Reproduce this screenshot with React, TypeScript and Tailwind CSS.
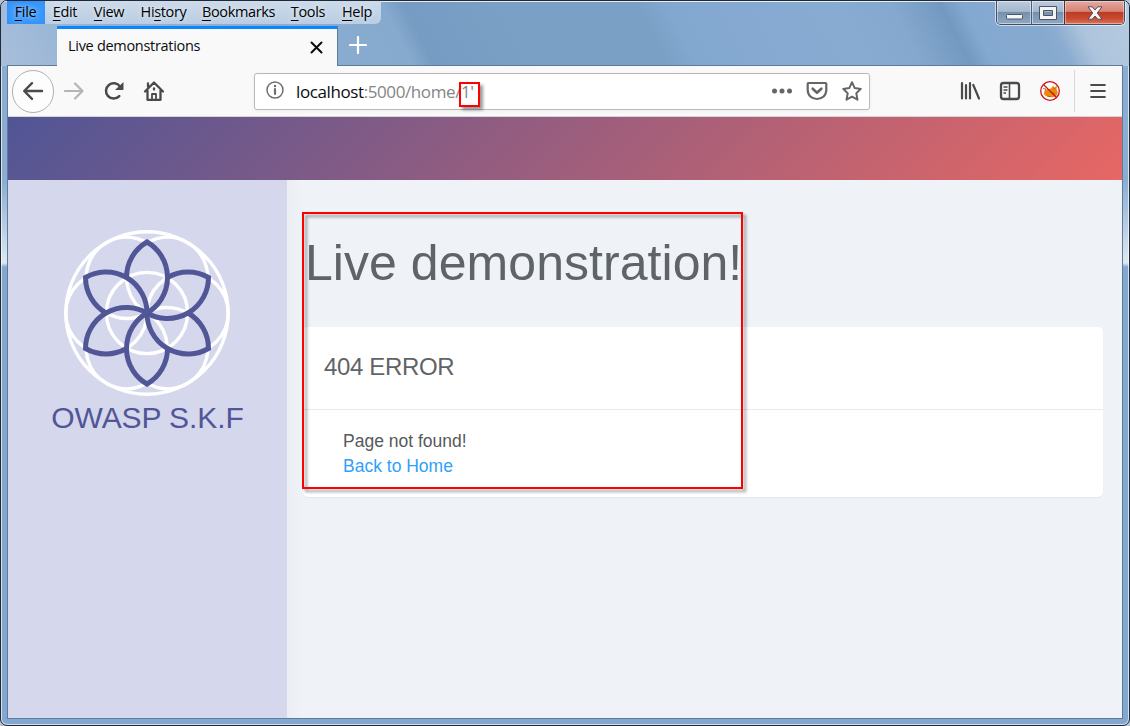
import React from "react";

const menu: [string, string, string, string][] = [
  ["", "F", "ile", "w-[38px] bg-[#3b98fb] shadow-[inset_0_0_5px_#2b8cf8]"],
  ["", "E", "dit", "w-[41px]"],
  ["", "V", "iew", "w-[47px]"],
  ["Hi", "s", "tory", "w-[62px]"],
  ["", "B", "ookmarks", "w-[88px]"],
  ["", "T", "ools", "w-[51px]"],
  ["", "H", "elp", "w-[47px]"],
];

function MenuBar() {
  return (
    <div className="flex h-[23px] rounded-br-md bg-[linear-gradient(#cddbea,#b9cde3)]">
      {menu.map(([a, u, b, cls]) => (
        <div key={u + b} className={`flex h-[23px] items-center justify-center pr-px text-[14.5px] leading-[21px] tracking-[-0.35px] whitespace-nowrap text-black [text-shadow:0_0_5px_#ffffffcc] ${cls}`}>
          <span className="-mt-[2px]">
            {a}
            <span className="underline decoration-1 underline-offset-[3px]">{u}</span>
            {b}
          </span>
        </div>
      ))}
    </div>
  );
}

function WindowControls() {
  return (
    <div className="mr-[4px] flex h-[24px] w-[129px] overflow-hidden rounded-b-[5px] border border-t-0 border-[#3f4f66] shadow-[0_0_0_1px_#ffffff99]">
      <div className="flex w-[35px] items-end justify-center border-r border-[#4b5f79] bg-[linear-gradient(#bccbdc_0%,#a5b8cd_45%,#7590ad_50%,#8fa9c4_100%)] pb-[4px] shadow-[inset_0_0_0_1px_#ffffff77]">
        <svg width="17" height="6"><rect x=".5" y=".5" width="16" height="4.500" rx="1" fill="#f5f5f5" stroke="#4c5566" /></svg>
      </div>
      <div className="flex w-[33px] items-center justify-center border-r border-[#5d2b2b] bg-[linear-gradient(#bccbdc_0%,#a5b8cd_45%,#7590ad_50%,#8fa9c4_100%)] shadow-[inset_0_0_0_1px_#ffffff77]">
        <svg width="18" height="14"><path d="M.5.5h17v13H.5zM4.500 4.500v5h9v-5z" fill="#f5f5f5" fillRule="evenodd" stroke="#4c5566" /></svg>
      </div>
      <div className="flex flex-1 items-center justify-center bg-[linear-gradient(#e5aaa0_0%,#d68476_45%,#bd3c25_50%,#c9482f_75%,#d9755b_100%)] shadow-[inset_0_0_0_1px_#ffffff66]">
        <svg width="16" height="14"><path d="M1 .8h4.200L8 4l2.800-3.200H15L10.300 7l4.700 6.200h-4.200L8 10l-2.800 3.200H1L5.700 7z" fill="#f5f5f5" stroke="#574a56" /></svg>
      </div>
    </div>
  );
}

function ChromeTop() {
  return (
    <div className="flex h-[65px] flex-col bg-[linear-gradient(63deg,#a9bfda_0px,#8fb0d3_110px,#86aace_368px,#779cc3_386px,#7ba0c6_478px,#7ba0c6_594px,#83a8cf_620px,#88abd2_772px,#84a8ce_821px,#7499c0_865px,#84a9d1_885px,#86a9ce_941px,#8bacd0_955px,#adc4dd_980px,#b5cbe0_1034px)] shadow-[inset_0_1px_0_#ffffffcc]">
      <div className="flex h-[25px] justify-between pl-[6px]">
        <MenuBar />
        <WindowControls />
      </div>
      <div className="flex h-[40px] pl-[6px]">
        <div className="w-[50px] border-b border-[#5f7b9b]" />
        <div className="flex h-[41px] w-[281px] shrink-0 items-center justify-between border-t-[3px] border-r border-t-[#0a84ff] border-r-[#5f7b9b] bg-[#f9f9fa] pr-[14px] pb-[2px] pl-[11px]">
          <span className="-mt-[2px] text-[14.500px] tracking-[-0.300px] whitespace-nowrap text-[#0c0c0d]">Live demonstrations</span>
          <svg width="13" height="13" viewBox="0 0 13 13" stroke="#0c0c0d" strokeWidth="2" strokeLinecap="round"><path d="M1.500 1.500l10 10M11.500 1.500l-10 10" /></svg>
        </div>
        <div className="mr-[6px] flex-1 border-b border-[#5f7b9b] pt-[10px] pl-[11px]">
          <svg width="18" height="18" viewBox="0 0 18 18" stroke="#fff" strokeWidth="2.200" strokeLinecap="round"><path d="M9 1v16M1 9h16" /></svg>
        </div>
      </div>
    </div>
  );
}

function NoScriptFox() {
  return (
    <svg width="22" height="22" viewBox="0 0 22 22">
      <circle cx="11" cy="11" r="9.300" fill="#fff" />
      <path d="M5 14.500c-.5-3 1.500-5.500 5-5.500 2-.3 3-1 4-3.500L15.500 7.500l2.500-2-.5 4c1.500 2 1.500 4 0 6-2 2.500-9 2.500-12.500-1z" fill="#ee8a0a" />
      <path d="M4 8.500l3 .5-1 2M8 16l4 .8M14.500 8.500l2 .5M13 12l3 2" stroke="#85652f" strokeWidth=".8" fill="none" />
      <circle cx="11" cy="11" r="9.300" fill="none" stroke="#d01018" strokeWidth="1.300" />
      <path d="M4.500 4.500l13 13" stroke="#d01018" strokeWidth="1.300" />
    </svg>
  );
}

function Toolbar() {
  return (
    <div className="flex h-[51px] items-center border-b border-[#d5d5d8] bg-[#f9f9fa] pl-[4px]">
      <div className="flex h-[43px] w-[42px] shrink-0 items-center justify-center rounded-full border border-[#b1b1b3] bg-[#fdfdfd]">
        <svg width="22" height="20" viewBox="0 0 22 20" fill="none" stroke="#4a4a4c" strokeWidth="2.400" strokeLinecap="round" strokeLinejoin="round"><path d="M20 10H2.500M10 2.200L2.200 10l7.800 7.800" /></svg>
      </div>
      <svg className="ml-[10px] shrink-0" width="20" height="20" viewBox="0 0 20 20" fill="none" stroke="#b5b5b6" strokeWidth="2.200" strokeLinecap="round" strokeLinejoin="round"><path d="M1 10h17M11 2.500l7.500 7.500-7.500 7.500" /></svg>
      <svg className="ml-[20px] shrink-0" width="20" height="20" viewBox="0 0 20 20" fill="none"><path d="M15.300 15.200A7.700 7.700 0 1 1 16 5.500" stroke="#4a4a4c" strokeWidth="2.500" strokeLinecap="round" /><path d="M19.500 1v7.300a.7.7 0 0 1-.7.700H11z" fill="#4a4a4c" /></svg>
      <svg className="ml-[19px] shrink-0" width="22" height="22" viewBox="0 0 22 22" fill="none" stroke="#4a4a4c" strokeWidth="2.300" strokeLinecap="round" strokeLinejoin="round"><path d="M2 11.500L11 2.500l9 9M4.500 10.500v9.300h13v-9.300M5 3.500V7" /><path d="M9 19.500V14h4v5.500" strokeWidth="1.800" /><path d="M11 8.500v1" /></svg>

      <div className="relative ml-[89px] flex h-[37px] w-[616px] shrink-0 items-center rounded-[3px] border border-[#b9b9bc] bg-white pr-[6px] pl-[11px] shadow-[0_1px_4px_#0000000d]">
        <svg className="-mt-[2px]" width="18" height="18" viewBox="0 0 18 18"><circle cx="9" cy="9" r="8" fill="none" stroke="#6f6f71" strokeWidth="1.500" /><path d="M9 8v5" stroke="#6f6f71" strokeWidth="2.200" strokeLinecap="round" /><circle cx="9" cy="4.900" r="1.250" fill="#6f6f71" /></svg>
        <span className="mt-[2px] ml-[12px] text-[17px] tracking-[-0.400px] whitespace-nowrap text-[#858587]"><span className="text-[#0c0c0d]">localhost</span>:5000/home/1'</span>
        <div className="absolute top-[8px] left-[204px] h-[25px] w-[21px] border-2 border-[#ff0000] shadow-[3px_3px_3px_#00000066]" />
        <div className="-mt-px ml-auto flex items-center">
          <svg width="20" height="6" viewBox="0 0 20 6" fill="#666668"><circle cx="2.500" cy="3" r="2.500" /><circle cx="10" cy="3" r="2.500" /><circle cx="17.500" cy="3" r="2.500" /></svg>
          <svg className="ml-[14px]" width="22" height="20" viewBox="0 0 22 20" fill="none" stroke="#666668" strokeWidth="2.200" strokeLinecap="round" strokeLinejoin="round"><path d="M2.500 2h17c.5 0 .8.300.8.800V9c0 5.500-4 9-9.300 9S1.700 14.500 1.700 9V2.800c0-.5.300-.8.800-.8z" /><path d="M6.700 7.700L11 11.700l4.300-4" strokeWidth="2.600" /></svg>
          <svg className="ml-[13px]" width="22" height="22" viewBox="0 0 22 22" fill="none" stroke="#666668" strokeWidth="2" strokeLinejoin="round"><path d="M11 2.200l2.700 5.900 6.100.8-4.500 4.400 1.200 6.400L11 16.600l-5.500 3.100 1.200-6.400L2.200 8.900l6.100-.8z" /></svg>
        </div>
      </div>

      <svg className="ml-[90px] shrink-0" width="20" height="20" viewBox="0 0 20 20" stroke="#4a4a4c" strokeWidth="2.200" strokeLinecap="round"><path d="M2 2v15.500M6 4v13.500M10 2v15.500M13.300 4L19 17.500" /></svg>
      <svg className="ml-[19px] shrink-0" width="22" height="20" viewBox="0 0 22 20" fill="none" stroke="#4a4a4c"><rect x="2" y="2" width="18" height="16" rx="2.500" strokeWidth="2.300" /><path d="M10.500 2.500v15" strokeWidth="1.600" /><path d="M4.500 6h4M4.500 9h4M4.500 12h2.500" strokeWidth="1.300" /></svg>
      <div className="ml-[18px] shrink-0"><NoScriptFox /></div>
      <div className="ml-[13px] h-[42px] w-px shrink-0 bg-[#d7d7db]" />
      <svg className="ml-[15px] shrink-0" width="16" height="16" viewBox="0 0 16 16" stroke="#4a4a4c" strokeWidth="2.200" strokeLinecap="round"><path d="M1.200 2h13.600M1.200 8h13.600M1.200 14h13.600" /></svg>
    </div>
  );
}

const angles = [0, 60, 120, 180, 240, 300];

function FlowerLogo() {
  return (
    <svg className="mr-px" width="168" height="168" viewBox="-84 -84 168 168" fill="none">
      <g stroke="#fff" strokeWidth="3.400">
        <circle r="81.200" />
        <circle r="40.600" />
        {angles.map((a) => (
          <circle key={a} cx="40.600" r="40.600" transform={`rotate(${a})`} />
        ))}
      </g>
      <g stroke="#515696" strokeWidth="5">
        {angles.map((a) => (
          <path key={a} d="M-20.500-35.500A41 41 0 0 1 0-71A41 41 0 0 1 0 0" strokeLinejoin="miter" transform={`rotate(${a})`} />
        ))}
      </g>
    </svg>
  );
}

function Page() {
  return (
    <div className="flex min-h-0 flex-1 flex-col font-['Liberation_Sans',Arial,sans-serif]">
      <div className="h-[63px] shrink-0 bg-[linear-gradient(135deg,#505596_0%,#e76764_100%)]" />
      <div className="flex min-h-0 flex-1">
        <aside className="flex w-[279px] shrink-0 flex-col items-center bg-[#d5d7ed] pt-[49px]">
          <FlowerLogo />
          <div className="mt-[3px] text-[30px] leading-[36px] tracking-[-0.1px] whitespace-nowrap text-[#515696]">OWASP S.K.F</div>
        </aside>
        <main className="relative flex-1 bg-[linear-gradient(90deg,#ebeff4_0px,#eff3f7_16px)] pt-[53px] pr-[19px] pl-[16px]">
          <h1 className="pl-[2px] text-[50px] leading-[60px] tracking-[0.05px] whitespace-nowrap text-[#5f6468]">Live demonstration!</h1>
          <section className="mt-[34px] h-[170px] rounded-[5px] bg-white shadow-[0_1px_1px_#0000000d]">
            <h2 className="h-[83px] border-b border-[#e7eaec] pt-[24px] pl-[21px] text-[24px] leading-[32px] tracking-[-0.35px] text-[#5f6468]">404 ERROR</h2>
            <div className="pt-[19px] pl-[40px] text-[17.5px] leading-[25px] text-[#55595c]">
              <p>Page not found!</p>
              <a className="text-[#30a0fb]">Back to Home</a>
            </div>
          </section>
          <div className="pointer-events-none absolute top-[32px] left-[15px] h-[277px] w-[441px] border-2 border-[#ff0000] drop-shadow-[3px_3px_1.5px_#00000066]" />
        </main>
      </div>
    </div>
  );
}

export default function App() {
  return (
    <div className="h-[726px] w-[1130px] overflow-hidden bg-[#b9c5d2] font-['Open_Sans','Noto_Sans',sans-serif]">
      <div className="flex h-[726px] flex-col overflow-hidden rounded-[7px] border border-[#202938] bg-[linear-gradient(#8aadd1_0px,#8aadd1_180px,#dfe8f0_262px,#83a8d0_266px)] shadow-[inset_0_0_0_1px_#ffffffaa]">
        <ChromeTop />
        <div className="mx-[6px] mb-[6px] flex min-h-0 flex-1 flex-col border border-t-0 border-[#5f7b9b]">
          <Toolbar />
          <Page />
        </div>
      </div>
    </div>
  );
}
